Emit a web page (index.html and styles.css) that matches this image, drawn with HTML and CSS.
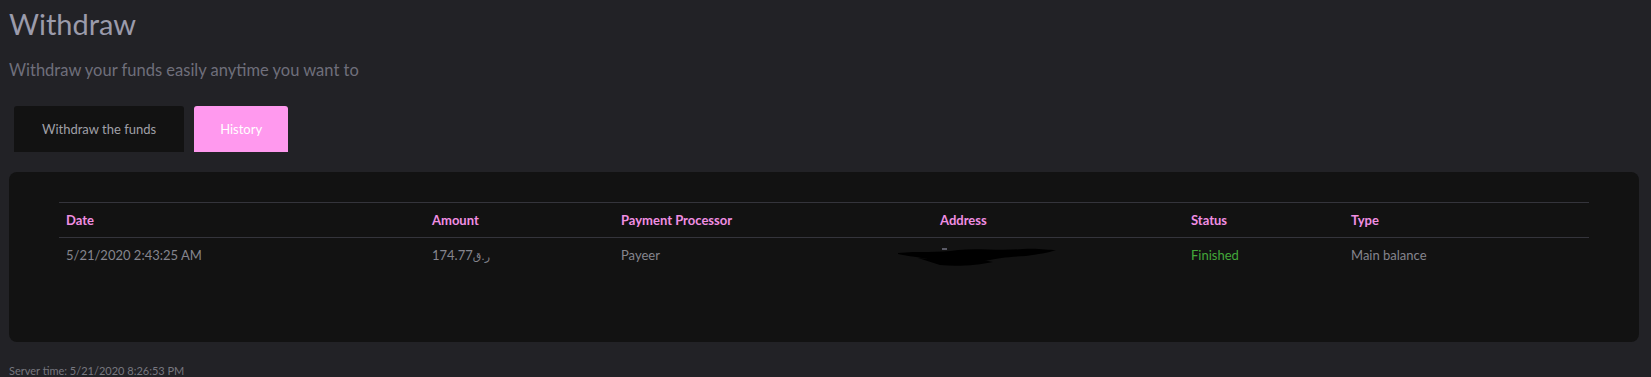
FILE: index.html
```html
<!DOCTYPE html>
<html lang="en">
<head>
  <meta charset="UTF-8">
  <title>Withdraw</title>
  <link rel="stylesheet" href="styles.css">
</head>
<body>

  <h1 class="page-title">Withdraw</h1>
  <p class="page-sub">Withdraw your funds easily anytime you want to</p>

  <div class="tabs">
    <button class="tab tab-first">Withdraw the funds</button>
    <button class="tab tab-active">History</button>
  </div>

  <div class="panel">
    <table class="history">
      <thead>
        <tr>
          <th class="c-date">Date</th>
          <th class="c-amount">Amount</th>
          <th class="c-proc">Payment Processor</th>
          <th class="c-addr">Address</th>
          <th class="c-status">Status</th>
          <th>Type</th>
        </tr>
      </thead>
      <tbody>
        <tr>
          <td>5/21/2020 2:43:25 AM</td>
          <td>174.77<span class="cur">ر.ق</span></td>
          <td>Payeer</td>
          <td class="addr">
            <svg class="scribble" width="170" height="20" viewBox="0 0 170 20">
              <path d="M0 5 C20 3 40 5 60 2 C80 0 100 3 125 1 C140 0 150 2 158 2 C150 5 140 6 128 8 C110 9 100 10 92 12 C80 14 70 16 60 16 C50 17 40 15 30 11 C20 9 8 8 0 6 Z" fill="#000"/>
              <path d="M20 10 C40 12 60 13 80 11 L95 14 C80 17 60 19 42 17 Z" fill="#000"/>
              <rect x="44" y="0" width="5" height="2" fill="#5a5a66"/>
            </svg>
          </td>
          <td class="ok">Finished</td>
          <td>Main balance</td>
        </tr>
      </tbody>
    </table>
  </div>

  <div class="server-time">Server time: 5/21/2020 8:26:53 PM</div>

</body>
</html>
```

FILE: styles.css
```css
body { margin: 0; padding: 0 12px 0 9px; background: #222226; font-family: Lato, "Open Sans", sans-serif; overflow: hidden; }
.page-title { margin: 0; padding-top: 7px; font-size: 29px; font-weight: 400; line-height: 34px; color: #9b9bab; }
.page-sub { margin: 19px 0 0; font-size: 16.5px; line-height: 20px; color: #6f6f7b; }
.tabs { display: flex; gap: 10px; margin: 26px 0 0 5px; }
.tab { height: 46px; padding: 0 26px; border: none; border-radius: 3px 3px 0 0; background: #121212; color: #a0a0a8; font-family: Lato, sans-serif; font-size: 13px; cursor: pointer; }
.tab-first { padding: 0 28px; }
.tab-active { background: #ff99ee; color: #fff; }
.panel { margin-top: 20px; height: 170px; box-sizing: border-box; padding: 30px 50px; background: #121212; border-radius: 8px; }
table.history { width: 100%; border-collapse: collapse; font-size: 13px; }
.history th, .history td { text-align: left; padding: 0 7px; height: 34px; }
.history th { color: #f08ee2; font-weight: 700; border-top: 1px solid #34343b; border-bottom: 1px solid #34343b; }
.history td { color: #85858e; }
.history td.ok { color: #43a83a; }
.c-date { width: 352px; }
.c-amount { width: 175px; }
.c-proc { width: 305px; }
.c-addr { width: 237px; }
.c-status { width: 146px; }
.cur { font-family: "DejaVu Sans", sans-serif; font-size: 11px; }
.addr { position: relative; }
.scribble { position: absolute; left: -35px; top: 10px; }
.server-time { margin-top: 22px; font-size: 11px; color: #77777f; }
```
